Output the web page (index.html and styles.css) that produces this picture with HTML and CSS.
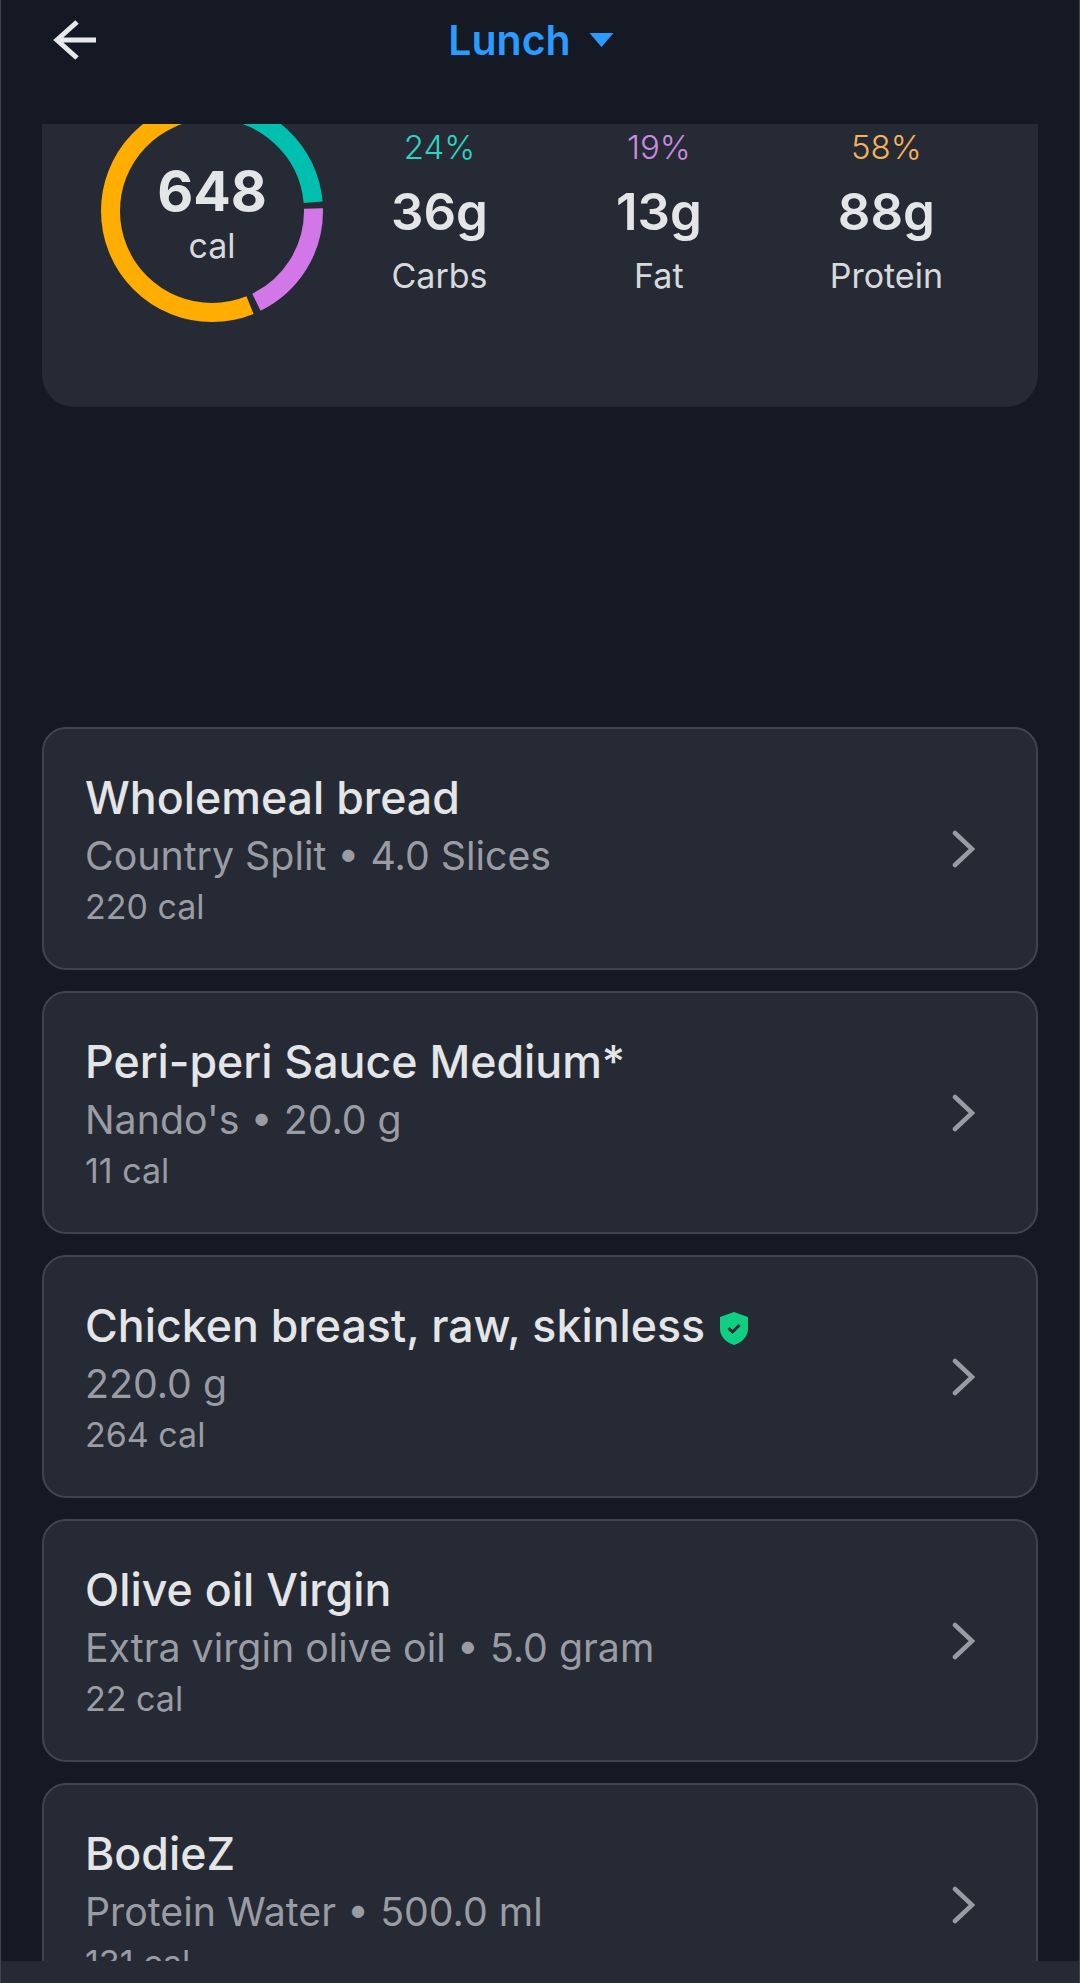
FILE: index.html
```html
<!DOCTYPE html>
<html lang="en">

<head>
    <meta charset="UTF-8">
    <meta name="viewport" content="width=device-width, initial-scale=1.0">
    <title>Lunch</title>
    <link rel="stylesheet" href="styles.css">
</head>

<body>
    <div class="app">
        <header class="topbar">
            <svg class="back" viewBox="0 0 44 42" width="44" height="42">
                <path d="M24 3 L4 21 L24 39 M4 21 H43" />
            </svg>
            <div class="meal">
                <span>Lunch</span>
                <svg class="caret" viewBox="0 0 24 14" width="25" height="14">
                    <path d="M0 0 H24 L12 14 Z" />
                </svg>
            </div>
        </header>

        <main class="scroller">
            <section class="summary">
                <div class="ring">
                    <svg viewBox="0 0 222 222" width="222" height="222">
                        <circle class="arc teal" cx="111" cy="111" r="101.5" pathLength="360" stroke-dasharray="86 274" stroke-dashoffset="91" />
                        <circle class="arc purple" cx="111" cy="111" r="101.5" pathLength="360" stroke-dasharray="65.4 294.6" stroke-dashoffset="1.4" />
                        <circle class="arc orange" cx="111" cy="111" r="101.5" pathLength="360" stroke-dasharray="199 161" stroke-dashoffset="-68" />
                    </svg>
                    <div class="ring-label">
                        <div class="ring-num">648</div>
                        <div class="ring-unit">cal</div>
                    </div>
                </div>
                <div class="macros">
                    <div class="macro">
                        <div class="pct pct-carbs">24%</div>
                        <div class="grams">36g</div>
                        <div class="macro-name">Carbs</div>
                    </div>
                    <div class="macro">
                        <div class="pct pct-fat">19%</div>
                        <div class="grams">13g</div>
                        <div class="macro-name">Fat</div>
                    </div>
                    <div class="macro">
                        <div class="pct pct-protein">58%</div>
                        <div class="grams">88g</div>
                        <div class="macro-name">Protein</div>
                    </div>
                </div>
            </section>

            <section class="foods">
                <div class="food">
                    <div class="food-text">
                        <div class="food-name">Wholemeal bread</div>
                        <div class="food-sub">Country Split • 4.0 Slices</div>
                        <div class="food-cal">220 cal</div>
                    </div>
                    <svg class="chevron" viewBox="0 0 24 40" width="24" height="40"><path d="M4 4 L21 20 L4 36" /></svg>
                </div>
                <div class="food">
                    <div class="food-text">
                        <div class="food-name">Peri-peri Sauce Medium*</div>
                        <div class="food-sub">Nando's • 20.0 g</div>
                        <div class="food-cal">11 cal</div>
                    </div>
                    <svg class="chevron" viewBox="0 0 24 40" width="24" height="40"><path d="M4 4 L21 20 L4 36" /></svg>
                </div>
                <div class="food">
                    <div class="food-text">
                        <div class="food-name">Chicken breast, raw, skinless
                            <svg class="shield" viewBox="0 0 28 33" width="28" height="33">
                                <path class="shield-body" d="M14 0 L28 5 V17 C28 25 21 31 14 33 C7 31 0 25 0 17 V5 Z" />
                                <path class="shield-tick" d="M8.5 16 L12.5 20 L19.5 13" />
                            </svg>
                        </div>
                        <div class="food-sub">220.0 g</div>
                        <div class="food-cal">264 cal</div>
                    </div>
                    <svg class="chevron" viewBox="0 0 24 40" width="24" height="40"><path d="M4 4 L21 20 L4 36" /></svg>
                </div>
                <div class="food">
                    <div class="food-text">
                        <div class="food-name">Olive oil Virgin</div>
                        <div class="food-sub">Extra virgin olive oil • 5.0 gram</div>
                        <div class="food-cal">22 cal</div>
                    </div>
                    <svg class="chevron" viewBox="0 0 24 40" width="24" height="40"><path d="M4 4 L21 20 L4 36" /></svg>
                </div>
                <div class="food">
                    <div class="food-text">
                        <div class="food-name">BodieZ</div>
                        <div class="food-sub">Protein Water • 500.0 ml</div>
                        <div class="food-cal">131 cal</div>
                    </div>
                    <svg class="chevron" viewBox="0 0 24 40" width="24" height="40"><path d="M4 4 L21 20 L4 36" /></svg>
                </div>
            </section>
        </main>

        <div class="bottombar"></div>
    </div>
</body>

</html>
```

FILE: styles.css
```css
* {
    box-sizing: border-box;
}

body {
    margin: 0;
    background-color: #141924;
    font-family: 'Inter', 'Liberation Sans', sans-serif;
    color: #e4e5e7;
}

.app {
    display: flex;
    flex-direction: column;
    width: 1080px;
    height: 1983px;
    overflow: hidden;
    border-left: 1px solid #3f444f;
    border-right: 1px solid #3f444f;
}

.topbar {
    position: relative;
    flex: 0 0 124px;
    background-color: #141924;
}

.back {
    position: absolute;
    left: 52px;
    top: 19px;
}

.back path {
    fill: none;
    stroke: #e8e9ea;
    stroke-width: 5;
}

.meal {
    display: flex;
    align-items: center;
    justify-content: center;
    gap: 18px;
    height: 80px;
    padding-right: 18px;
    font-size: 41px;
    font-weight: 600;
    color: #2a9bff;
}

.caret {
    fill: #2a9bff;
}

.scroller {
    flex: 1;
    overflow: hidden;
    padding: 0 41px;
}

.summary {
    display: flex;
    height: 327px;
    margin-top: -44px;
    padding: 20px 95px 0 59px;
    background-color: #262a35;
    border-radius: 32px;
}

.ring {
    position: relative;
    flex: 0 0 222px;
    width: 222px;
    height: 222px;
    margin-right: 68px;
}

.arc {
    fill: none;
    stroke-width: 19;
}

.teal {
    stroke: #00bfae;
}

.purple {
    stroke: #d277e8;
}

.orange {
    stroke: #ffad00;
}

.ring-label {
    position: absolute;
    left: 0;
    right: 0;
    top: 59px;
    text-align: center;
}

.ring-num {
    font-size: 55.5px;
    font-weight: 700;
    line-height: 64px;
}

.ring-unit {
    font-size: 34px;
    line-height: 45px;
    color: #d8d9dc;
}

.macros {
    flex: 1;
    display: flex;
    justify-content: space-between;
    padding-top: 15px;
}

.macro {
    text-align: center;
}

.pct {
    font-size: 33px;
    font-weight: 300;
    line-height: 64px;
}

.pct-carbs {
    color: #2ed3c0;
}

.pct-fat {
    color: #c98ae0;
}

.pct-protein {
    color: #f5b25c;
}

.grams {
    margin-top: 1px;
    font-size: 51px;
    font-weight: 600;
    line-height: 64px;
}

.macro-name {
    font-size: 34px;
    line-height: 64px;
    color: #d8d9dc;
}

.foods {
    display: flex;
    flex-direction: column;
    gap: 21px;
    margin-top: 320px;
}

.food {
    display: flex;
    align-items: center;
    justify-content: space-between;
    flex: 0 0 243px;
    padding: 0 61px 0 41px;
    background-color: #262a35;
    border: 2px solid #3f444f;
    border-radius: 24px;
}

.food-text {
    padding-top: 2px;
}

.food-name {
    font-size: 44.7px;
    font-weight: 500;
    line-height: 58px;
}

.food-sub {
    font-size: 39.3px;
    line-height: 58px;
    color: #9a9ca3;
}

.food-cal {
    margin-top: -1px;
    font-size: 34px;
    line-height: 46px;
    color: #9a9ca3;
}

.shield {
    margin-left: 3px;
    vertical-align: -3px;
}

.shield-body {
    fill: #0fcf82;
}

.shield-tick {
    fill: none;
    stroke: #262a35;
    stroke-width: 3;
}

.chevron {
    flex: none;
}

.chevron path {
    fill: none;
    stroke: #9a9ca3;
    stroke-width: 4.5;
    stroke-linecap: round;
}

.bottombar {
    flex: 0 0 22px;
    background-color: #262a35;
    margin: 0 -1px;
}
```
